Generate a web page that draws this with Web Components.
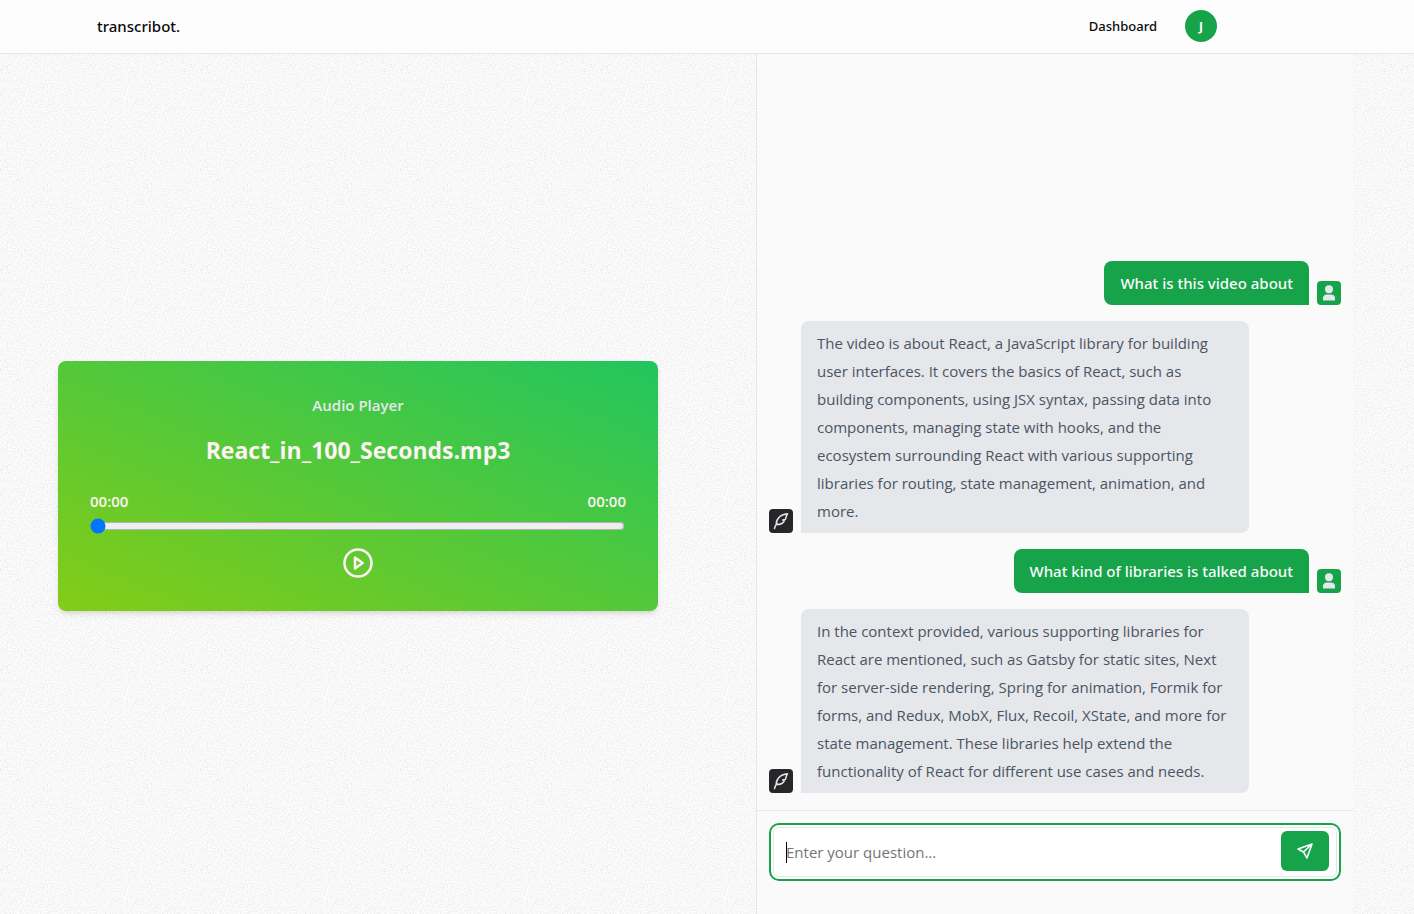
<!DOCTYPE html>
<html lang="en">
<head>
<meta charset="utf-8">
<meta name="viewport" content="width=device-width, initial-scale=1">
<title>transcribot.</title>
<style>
html,body{margin:0;min-height:100%}
body{font-family:"Open Sans","Noto Sans",sans-serif;font-size:15px;line-height:28px;color:#0a0a0a;background:#fafafa;
--green:#16a34a;--line:#e5e7eb;--paper:#fafafa;--medium:"Noto Sans","Open Sans",sans-serif}
</style>
</head>
<body>
<app-shell>
  <app-header slot="header" initial="J"></app-header>
  <audio-player name="React_in_100_Seconds.mp3"></audio-player>
  <chat-panel slot="side">
    <chat-message from="user">What is this video about</chat-message>
    <chat-message from="bot">The video is about React, a JavaScript library for building user interfaces. It covers the basics of React, such as building components, using JSX syntax, passing data into components, managing state with hooks, and the ecosystem surrounding React with various supporting libraries for routing, state management, animation, and more.</chat-message>
    <chat-message from="user">What kind of libraries is talked about</chat-message>
    <chat-message from="bot">In the context provided, various supporting libraries for React are mentioned, such as Gatsby for static sites, Next for server-side rendering, Spring for animation, Formik for forms, and Redux, MobX, Flux, Recoil, XState, and more for state management. These libraries help extend the functionality of React for different use cases and needs.</chat-message>
    <chat-input slot="composer"></chat-input>
  </chat-panel>
</app-shell>
<script>
const define = (name, html) => customElements.define(name, class extends HTMLElement {
  constructor() {
    super();
    this.attachShadow({ mode: 'open' }).innerHTML = html(this);
  }
});

define('app-shell', () => `
<style>
:host{display:flex;flex-direction:column;min-height:100vh;
background-color:#fcfcfc;
background-image:url("data:image/svg+xml,%3Csvg xmlns='http://www.w3.org/2000/svg' width='100' height='100'%3E%3Cfilter id='n' x='0' y='0' width='100%25' height='100%25'%3E%3CfeTurbulence type='fractalNoise' baseFrequency='.7' numOctaves='3' stitchTiles='stitch'/%3E%3CfeColorMatrix values='0 0 0 0 .55 0 0 0 0 .55 0 0 0 0 .56 .8 0 0 0 -.34'/%3E%3C/filter%3E%3Crect width='100' height='100' filter='url(%23n)'/%3E%3C/svg%3E")}
main{flex:1;display:grid;grid-template-columns:minmax(0,1fr) minmax(0,597px);padding-right:61px}
.media{display:flex;align-items:center;justify-content:center;padding:4px 40px 0 0}
</style>
<slot name="header"></slot>
<main><section class="media"><slot></slot></section><slot name="side"></slot></main>`);

define('app-header', el => `
<style>
:host{display:block;background:#fdfdfd;border-bottom:1px solid var(--line)}
header{display:flex;align-items:center;justify-content:space-between;height:52px;padding:0 197px 1px 97px}
a{color:inherit;text-decoration:none;font-family:var(--medium);font-weight:500}
nav{display:flex;align-items:center;gap:28px}
nav a{font-size:13px}
button{width:32px;height:32px;border:0;border-radius:50%;padding:0;background:var(--green);color:#fff;font-family:inherit;font-size:12px;font-weight:700}
</style>
<header><a href="#">transcribot.</a><nav><a href="#">Dashboard</a><button aria-label="Account">${el.getAttribute('initial')}</button></nav></header>`);

define('audio-player', el => `
<style>
:host{display:block;flex:0 1 600px}
article{display:flex;flex-direction:column;align-items:center;box-sizing:border-box;min-height:250px;padding:32px 32px 30px;border-radius:8px;
background:linear-gradient(to top right,#84cc16,#22c55e);box-shadow:0 4px 6px -1px #0000001a,0 2px 4px -2px #0000001a;color:#fef2f2}
p{margin:0;line-height:24px;font-weight:600;color:#e5e7eb}
h2{margin:17px 0 0;font-size:23px;line-height:32px;font-weight:700}
.times{align-self:stretch;display:flex;justify-content:space-between;margin-top:23px;font-weight:600;line-height:24px}
input{align-self:stretch;margin:5px 1px 0 0;height:16px;accent-color:#0075ff}
button{margin-top:11px;padding:0;border:0;background:none;color:inherit;height:36px}
svg{display:block}
</style>
<article>
<p>Audio Player</p><h2>${el.getAttribute('name')}</h2>
<div class="times"><span>00:00</span><span>00:00</span></div>
<input type="range" min="0" max="100" value="0" aria-label="Seek">
<button aria-label="Play"><svg width="36" height="36" viewBox="0 0 24 24" fill="none" stroke="currentColor" stroke-width="1.7"><circle cx="12" cy="12" r="9"/><path d="M10 8.400v7.200l5.100-3.600z" stroke-linejoin="round"/></svg></button>
</article>`);

define('chat-panel', () => `
<style>
:host{display:flex;flex-direction:column;background:var(--paper);border-left:1px solid var(--line)}
.log{flex:1;display:flex;flex-direction:column;justify-content:flex-end;gap:16px;padding:16px 12px 17px}
footer{border-top:1px solid var(--line);padding:16px 16px 37px}
</style>
<div class="log"><slot></slot></div><footer><slot name="composer"></slot></footer>`);

const icons = {
  user: '<svg width="16" height="16" viewBox="0 0 16 16" fill="#e5e7eb"><circle cx="8" cy="4.300" r="4"/><path d="M2 15.500v-2.500C2 10.900 3.600 9.600 6 9.600h4c2.400 0 4 1.300 4 3.400v2.500z"/></svg>',
  bot: '<svg width="18" height="18" viewBox="0 0 18 18" fill="none" stroke="#e5e7eb" stroke-width="1.500" stroke-linecap="round" stroke-linejoin="round"><path d="M2.500 16.500C3 14.300 3.700 12.900 5 11.300M4.300 12.600C3.800 8 7.500 2.300 15.500 1.700 14 3.700 14.300 5.300 13.300 7.500l-2.600.5 1.500 1C10.500 11.800 8 12.800 4.300 12.600"/></svg>'
};
define('chat-message', el => {
  const from = el.getAttribute('from');
  return `
<style>
:host{display:flex;align-items:flex-end;gap:8px}
:host([from=user]){flex-direction:row-reverse}
.avatar{flex:none;display:grid;place-items:center;width:24px;height:24px;border-radius:4px;background:#27272a}
:host([from=user]) .avatar{background:var(--green)}
.bubble{margin:0;max-width:448px;box-sizing:border-box;padding:8px 16px;border-radius:8px 8px 8px 0;background:#e5e7eb;color:#4b5563}
:host([from=user]) .bubble{border-radius:8px 8px 0 8px;background:var(--green);color:#f9fafb;font-family:var(--medium);font-weight:500}
</style>
<span class="avatar">${icons[from]}</span><p class="bubble"><slot></slot></p>`;
});

define('chat-input', () => `
<style>
:host{display:block}
form{position:relative;display:flex;align-items:center;box-sizing:border-box;height:50px;padding:0 7px 2px 12px;border:1px solid var(--line);border-radius:6px;background:#fff;
box-shadow:0 0 0 2px #fff,0 0 0 4px var(--green)}
input{flex:1;min-width:0;border:0;outline:0;padding:2px 0 0;background:none;font:inherit;color:inherit;height:28px}
input::placeholder{color:#757575;opacity:1}
.caret{position:absolute;left:12px;top:14px;width:1px;height:21px;background:#000}
button{width:48px;height:40px;padding:0;border:0;border-radius:6px;background:var(--green);display:grid;place-items:center}
</style>
<form onsubmit="return false"><span class="caret"></span><input type="text" placeholder="Enter your question..." aria-label="Your question">
<button aria-label="Send"><svg width="16" height="16" viewBox="0 0 16 16" fill="none" stroke="#fff" stroke-width="1.500" stroke-linejoin="round"><path d="M15 1 1 6l5.500 3L10 15zM15 1 6.500 9"/></svg></button></form>`);
</script>
</body>
</html>
